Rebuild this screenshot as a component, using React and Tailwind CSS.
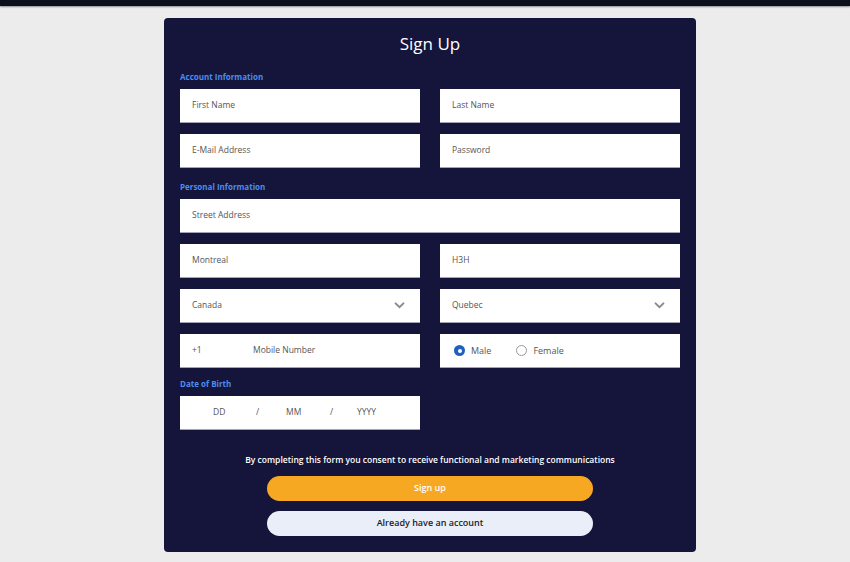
import React from 'react';

const font = { fontFamily: '"Open Sans", "Noto Sans", sans-serif' };

const Field = ({ children, className = '' }) => (
  <div className={`h-[34px] bg-white border-b-[1.5px] border-[#a4a4b8] flex items-center px-3 text-[8.5px] text-[#555] ${className}`}>
    {children}
  </div>
);

const Chevron = () => (
  <svg width="11" height="7" viewBox="0 0 12 8" className="ml-auto mr-[3px]">
    <path d="M1.5 1.5 L6 6 L10.5 1.5" fill="none" stroke="#8a8a8a" strokeWidth="2.2" strokeLinecap="round" />
  </svg>
);

const SectionLabel = ({ children }) => (
  <div className="text-[8px] font-bold text-[#4b8df0] leading-none">{children}</div>
);

const App = () => {
  return (
    <div className="w-[850px] h-[562px] bg-[#ececec] overflow-hidden" style={font}>
      <div className="h-[6px] bg-[#0b0f1c] shadow-[0_1px_2px_rgba(0,0,0,0.4)]" />
      <div className="ml-[164px] mt-[12px] w-[532px] h-[534px] bg-[#15143a] rounded-[4px] px-4 pt-[14px]">
        <h1 className="text-center text-white text-[17px] leading-[24px] font-medium">Sign Up</h1>

        <div className="mt-[17px]">
          <SectionLabel>Account Information</SectionLabel>
        </div>
        <div className="grid grid-cols-2 gap-x-5 gap-y-[11px] mt-[8px]">
          <Field>First Name</Field>
          <Field>Last Name</Field>
          <Field>E-Mail Address</Field>
          <Field>Password</Field>
        </div>

        <div className="mt-[15px]">
          <SectionLabel>Personal Information</SectionLabel>
        </div>
        <div className="grid grid-cols-2 gap-x-5 gap-y-[11px] mt-[8px]">
          <Field className="col-span-2">Street Address</Field>
          <Field>Montreal</Field>
          <Field>H3H</Field>
          <Field>
            Canada
            <Chevron />
          </Field>
          <Field>
            Quebec
            <Chevron />
          </Field>
          <Field>
            <span className="w-[61px]">+1</span>
            <span>Mobile Number</span>
          </Field>
          <Field>
            <span className="ml-[2px] w-[11px] h-[11px] rounded-full bg-[#1f5fbf] flex items-center justify-center mr-[6px]">
              <span className="w-[4px] h-[4px] rounded-full bg-white" />
            </span>
            <span className="mr-[25px] text-[9px]">Male</span>
            <span className="w-[11px] h-[11px] rounded-full border border-[#999] mr-[6px]" />
            <span className="text-[9px]">Female</span>
          </Field>
        </div>

        <div className="mt-[12px]">
          <SectionLabel>Date of Birth</SectionLabel>
        </div>
        <div className="grid grid-cols-2 gap-x-5 mt-[8px]">
          <Field>
            <span className="ml-[21px] w-[43px]">DD</span>
            <span className="w-[30px]">/</span>
            <span className="w-[44px]">MM</span>
            <span className="w-[27px]">/</span>
            <span>YYYY</span>
          </Field>
        </div>

        <p className="text-center text-white font-semibold text-[8.5px] mt-[26px] leading-none">
          By completing this form you consent to receive functional and marketing communications
        </p>
        <div className="flex flex-col items-center gap-[10px] mt-[11px]">
          <button className="w-[326px] h-[25px] rounded-full bg-[#f7a823] text-white text-[9px] font-semibold">
            Sign up
          </button>
          <button className="w-[326px] h-[25px] rounded-full bg-[#e9eef8] text-[#1a1a2a] text-[9px] font-semibold">
            Already have an account
          </button>
        </div>
      </div>
    </div>
  );
};

export default App;
